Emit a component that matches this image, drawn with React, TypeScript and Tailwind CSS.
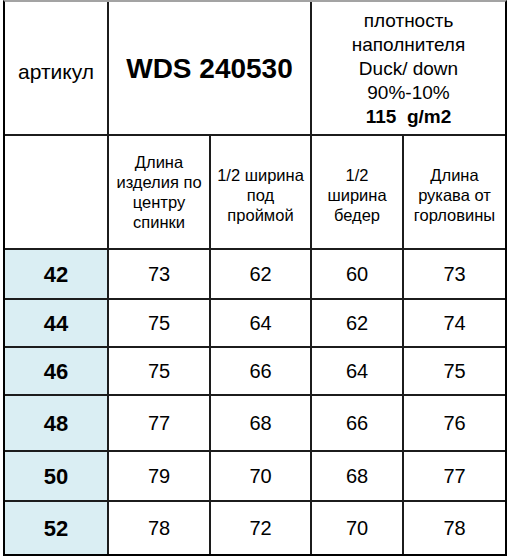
import React from "react";

const rows = [
  { s: "42", v: ["73", "62", "60", "73"], h: "h-[48px]" },
  { s: "44", v: ["75", "64", "62", "74"], h: "h-[46px]" },
  { s: "46", v: ["75", "66", "64", "75"], h: "h-[46px]" },
  { s: "48", v: ["77", "68", "66", "76"], h: "h-[54px]" },
  { s: "50", v: ["79", "70", "68", "77"], h: "h-[48px]" },
  { s: "52", v: ["78", "72", "70", "78"], h: "h-[52px]" },
];

export default function App() {
  const font = { fontFamily: '"Liberation Sans", Arial, sans-serif' };
  return (
    <div className="w-[512px] h-[560px] bg-white overflow-hidden" style={font}>
      <div className="ml-[3px] w-[504px] border-l-2 border-r-2 border-b-2 border-l-black border-r-black border-b-black border-t-2 border-t-[#a3a3a3] bg-[#1c1c1c] grid grid-cols-[102px_100px_99px_90px_101px] gap-[2px] text-black">
        {/* header row 1 */}
        <div className="bg-white h-[132px] flex items-center justify-center text-[21px] pt-[7px]">артикул</div>
        <div className="bg-white col-span-2 flex items-center justify-center text-[28px] font-bold pt-[1px]">WDS 240530</div>
        <div className="bg-white col-span-2 flex flex-col items-center justify-center text-[19px] leading-[24px] pt-[1px]">
          <span>плотность</span>
          <span>наполнителя</span>
          <span>Duck/ down</span>
          <span>90%-10%</span>
          <span className="font-bold">115&nbsp; g/m2</span>
        </div>
        {/* header row 2 */}
        <div className="bg-white h-[112px]"></div>
        <div className="bg-white flex items-center justify-center text-center text-[16.5px] leading-[20px]">
          Длина<br />изделия по<br />центру<br />спинки
        </div>
        <div className="bg-white flex items-center justify-center text-center text-[16.5px] leading-[20px] pt-[6px]">
          1/2 ширина<br />под<br />проймой
        </div>
        <div className="bg-white flex items-center justify-center text-center text-[16.5px] leading-[20px] pt-[6px]">
          1/2<br />ширина<br />бедер
        </div>
        <div className="bg-white flex items-center justify-center text-center text-[16.5px] leading-[20px] pt-[6px]">
          Длина<br />рукава от<br />горловины
        </div>
        {rows.map((r) => (
          <React.Fragment key={r.s}>
            <div className={`bg-[#daeef3] ${r.h} flex items-center justify-center text-[22px] font-bold`}>{r.s}</div>
            {r.v.map((x, i) => (
              <div key={i} className="bg-white flex items-center justify-center text-[20px]">{x}</div>
            ))}
          </React.Fragment>
        ))}
      </div>
    </div>
  );
}
